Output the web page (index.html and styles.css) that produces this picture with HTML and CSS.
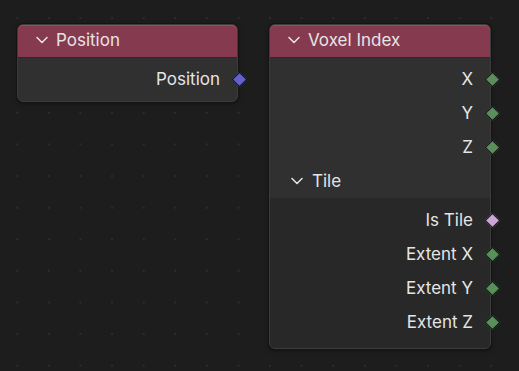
FILE: index.html
```html
<!DOCTYPE html>
<html lang="en">
<head>
    <meta charset="UTF-8">
    <meta name="viewport" content="width=device-width, initial-scale=1.0">
    <title>Node Editor</title>
    <link rel="stylesheet" href="styles.css">
</head>
<body>

    <div class="canvas">
        <!-- Position input node -->
        <div class="node node-small">
            <div class="node-header">
                <svg class="chevron" viewBox="0 0 12 8"><polyline points="1,1.5 6,6.5 11,1.5"/></svg>
                <span>Position</span>
            </div>
            <div class="node-body pad-small">
                <div class="socket-row">Position <i class="socket vector"></i></div>
            </div>
        </div>

        <!-- Voxel Index node -->
        <div class="node node-voxel">
            <div class="node-header">
                <svg class="chevron" viewBox="0 0 12 8"><polyline points="1,1.5 6,6.5 11,1.5"/></svg>
                <span>Voxel Index</span>
            </div>
            <div class="node-body">
                <div class="socket-row">X <i class="socket int"></i></div>
                <div class="socket-row">Y <i class="socket int"></i></div>
                <div class="socket-row">Z <i class="socket int"></i></div>
            </div>
            <div class="panel-header">
                <svg class="chevron" viewBox="0 0 12 8"><polyline points="1,1.5 6,6.5 11,1.5"/></svg>
                <span>Tile</span>
            </div>
            <div class="panel-body">
                <div class="socket-row">Is Tile <i class="socket bool"></i></div>
                <div class="socket-row">Extent X <i class="socket int"></i></div>
                <div class="socket-row">Extent Y <i class="socket int"></i></div>
                <div class="socket-row">Extent Z <i class="socket int"></i></div>
            </div>
        </div>
    </div>

</body>
</html>
```

FILE: styles.css
```css
* {
    margin: 0;
    padding: 0;
    box-sizing: border-box;
    font-family: 'Inter', 'DejaVu Sans', sans-serif;
}

body {
    width: 519px;
    height: 371px;
    overflow: hidden;
    background-color: #1d1d1d;
    background-image: radial-gradient(circle, #2c2c2c 0.9px, transparent 1.3px);
    background-size: 31.6px 31.6px;
    background-position: 1.5px 2.3px;
}

.canvas {
    display: flex;
    align-items: flex-start;
    gap: 31px;
    padding: 24px 0 0 17px;
}

.node {
    background: #303030;
    border: 1px solid #3c3c3c;
    border-radius: 6px;
    box-shadow: 0 0 0 1px #141414, 0 2px 5px rgba(0, 0, 0, 0.35);
    color: #e5e5e5;
    font-size: 17px;
}

.node-small { width: 221px; }
.node-voxel { width: 222px; }

.node-header {
    height: 33px;
    display: flex;
    align-items: center;
    gap: 8px;
    padding: 0 0 2px 18px;
    background: #863a50;
    border-radius: 5px 5px 0 0;
    border-bottom: 1px solid #2a2a2a;
    box-shadow: inset 0 1px 0 #9a4a61;
}

.chevron {
    width: 12px;
    height: 8px;
    fill: none;
    stroke: #e5e5e5;
    stroke-width: 1.5;
    stroke-linecap: round;
    stroke-linejoin: round;
}

.node-body { padding: 4px 0 0; }
.node-body.pad-small { padding: 4px 0 5px; }

.socket-row {
    position: relative;
    height: 34px;
    display: flex;
    align-items: center;
    justify-content: flex-end;
    padding-right: 17px;
}

.socket {
    position: absolute;
    right: -8px;
    top: 50%;
    width: 11px;
    height: 11px;
    margin-top: -5.5px;
    transform: rotate(45deg);
    border: 1px solid #151515;
}

.socket.vector { background: #6363c7; }
.socket.int { background: #5a8f5c; }
.socket.bool { background: #cca6d6; }

.panel-header {
    height: 34px;
    display: flex;
    align-items: center;
    gap: 9px;
    padding-left: 21px;
    background: #303030;
}

.panel-body {
    background: #282828;
    padding: 5px 0 9px;
    border-radius: 0 0 5px 5px;
}
```
